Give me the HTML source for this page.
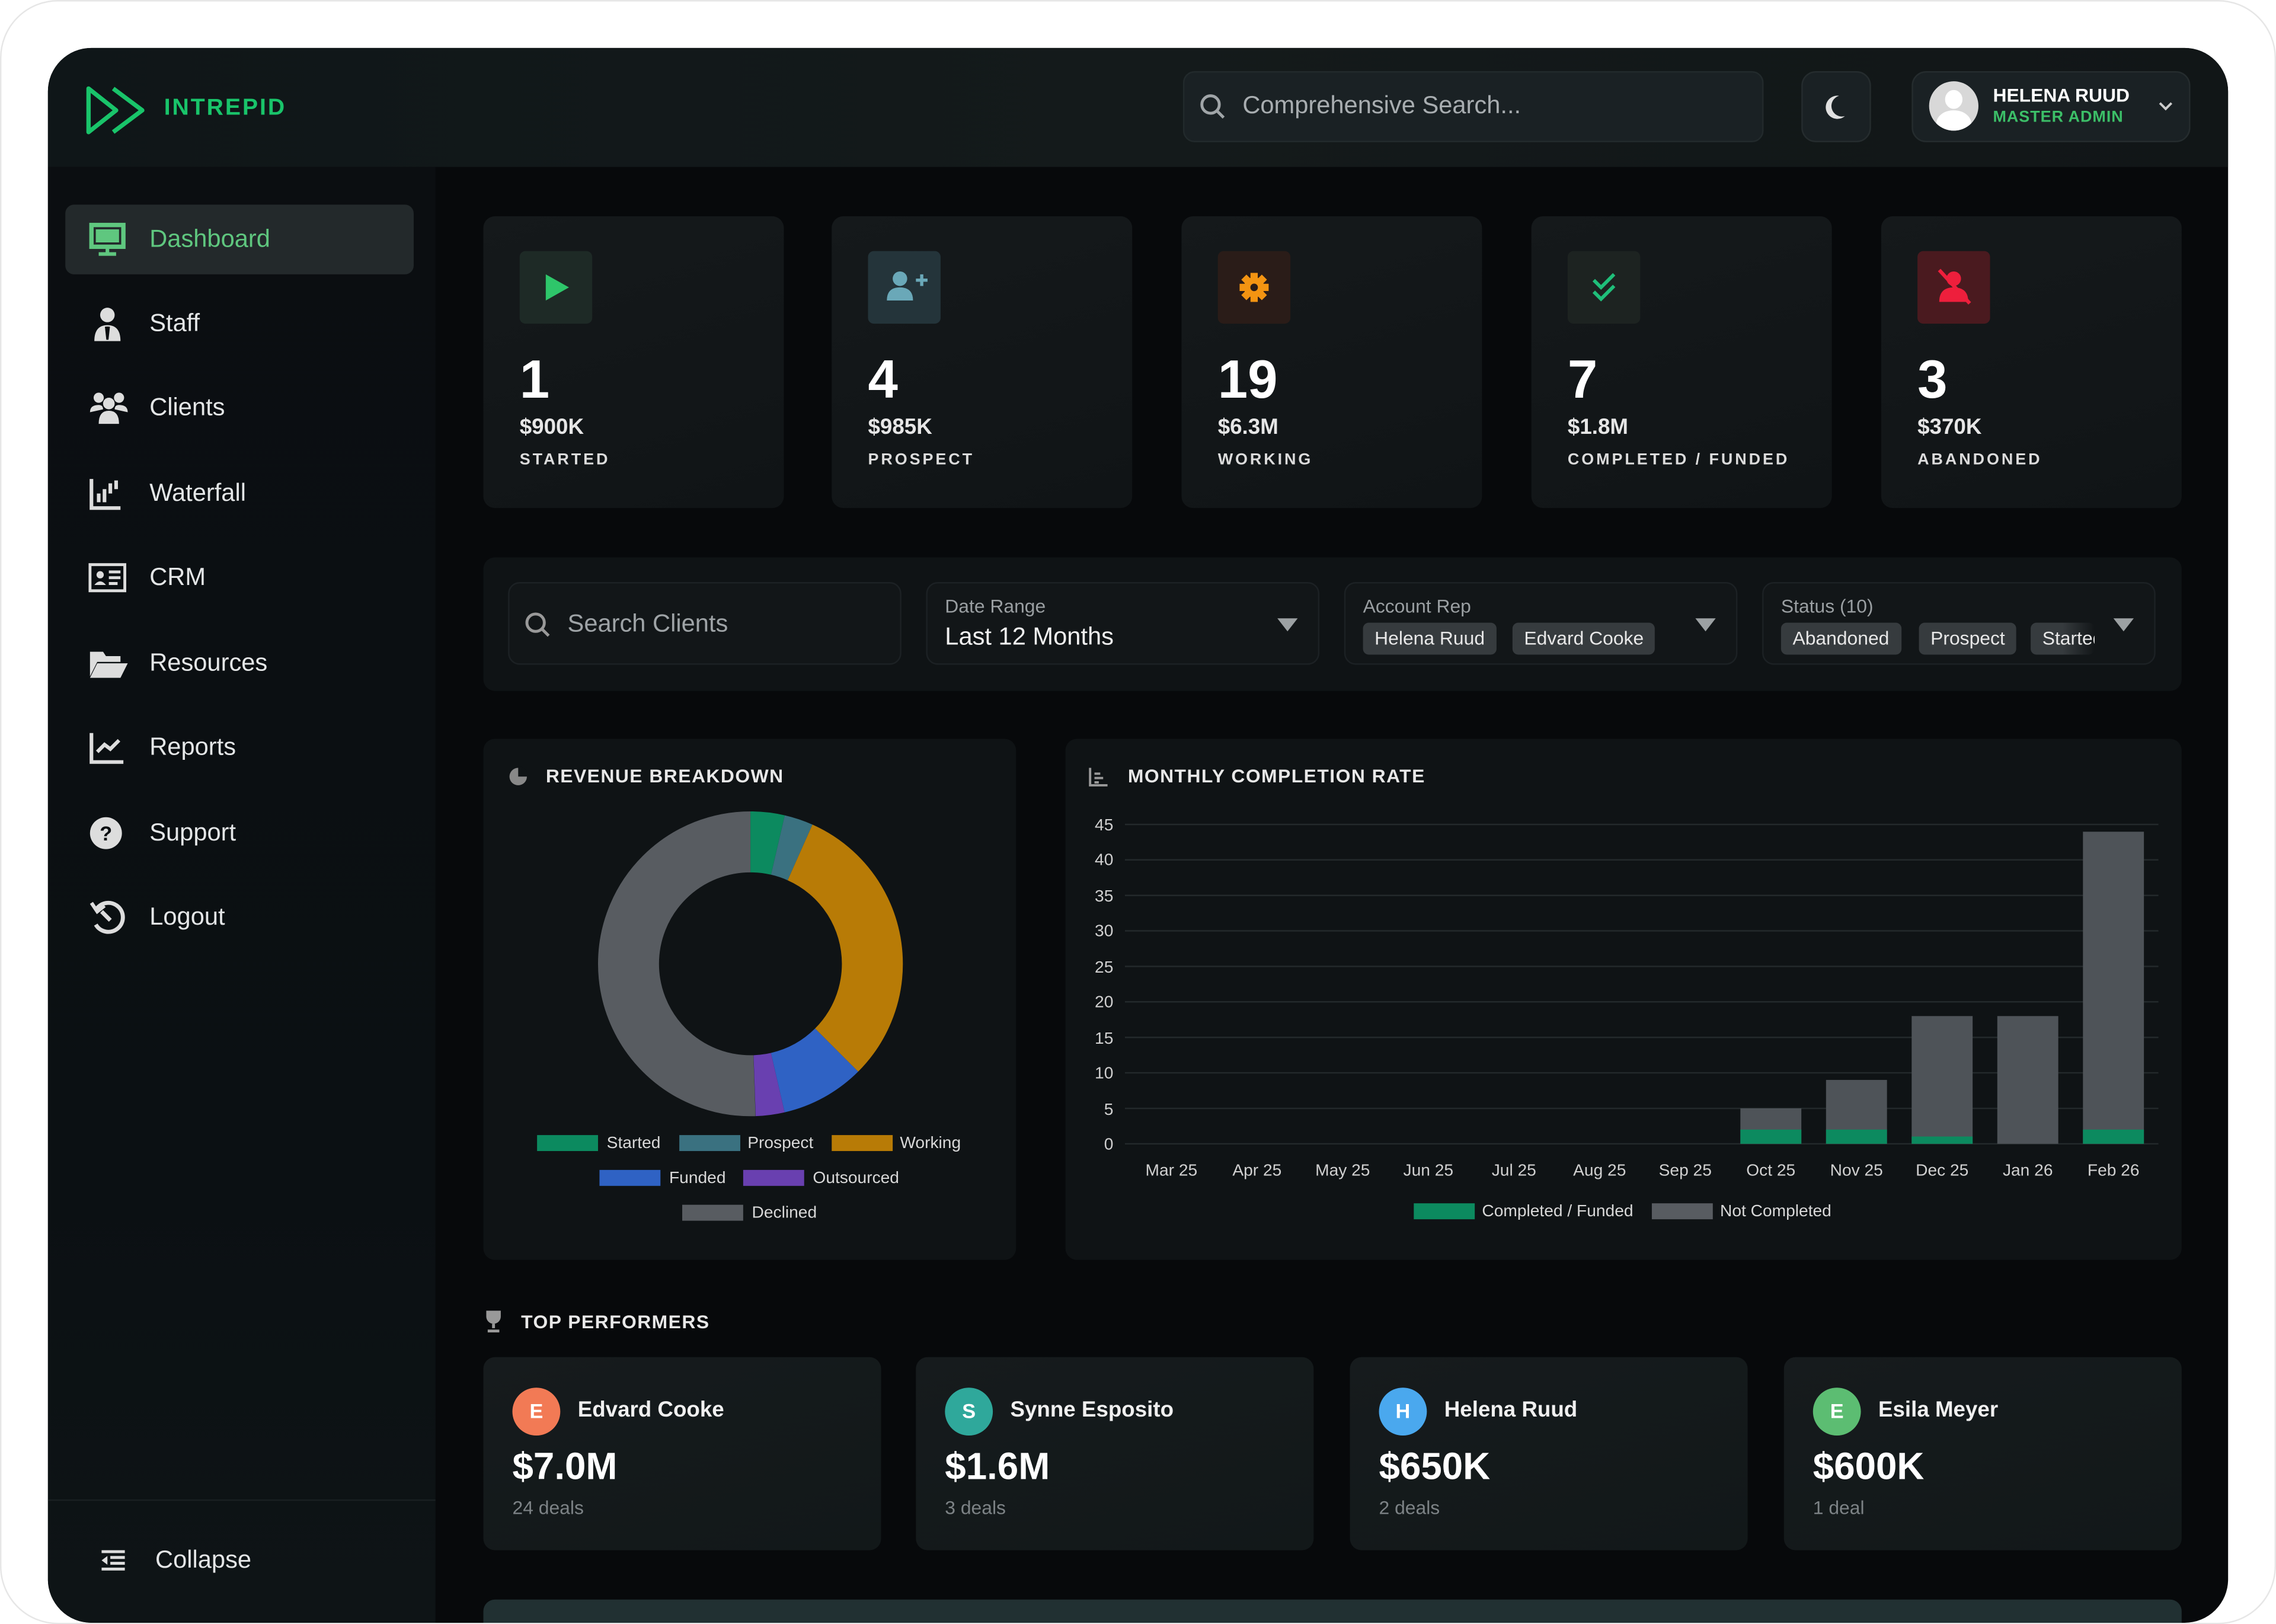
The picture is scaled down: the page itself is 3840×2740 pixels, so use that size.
<!DOCTYPE html>
<html><head><meta charset="utf-8"><style>
*{box-sizing:border-box;margin:0;padding:0}
html,body{width:3840px;height:2739px;overflow:hidden;background:#fff}
#s{position:absolute;left:0;top:0;width:1568px;height:1119px;transform:scale(2.44898);transform-origin:0 0;font-family:"Liberation Sans",sans-serif;color:#e8eaeb}
.abs{position:absolute}
.app{left:33px;top:33px;width:1502px;height:1085px;border-radius:30px 30px 30px 30px;background:#07090b;overflow:hidden}
.hdr{left:0;top:0;width:1502px;height:82px;background:linear-gradient(90deg,#0f1618,#141a1b 50%,#111617)}
.side{left:0;top:82px;width:267px;height:1003px;background:linear-gradient(180deg,#0b0e11,#0b1013 70%,#0e1416)}
.nav{position:absolute;left:12px;width:240px;height:48px;border-radius:6px;display:flex;align-items:center;font-size:17px;color:#e4e6e7}
.nav svg{position:absolute;left:16px}
.nav span{position:absolute;left:58px}
.card{position:absolute;background:linear-gradient(160deg,#15191b,#101416);border-radius:8px}
.ib{position:absolute;left:25px;top:24px;width:50px;height:50px;border-radius:4px}
.num{position:absolute;left:25px;top:92px;font-size:37px;font-weight:bold;color:#fff}
.val{position:absolute;left:25px;top:137px;font-size:15px;font-weight:bold;color:#e6e6e6}
.lab{position:absolute;left:25px;top:162px;font-size:11px;font-weight:bold;letter-spacing:1.6px;color:#dcdcdc}
.inp{position:absolute;top:17px;width:271px;height:57px;border-radius:8px;background:#121618;border:1px solid #1c2124}
.sl{position:absolute;left:12px;top:8px;font-size:13px;color:#9a9fa2}
.chip{position:absolute;top:27px;height:22px;border-radius:4px;background:#363b3e;color:#e8e8e8;font-size:13px;line-height:22px;padding:0 8px}
.tri{position:absolute;right:14px;top:24px;width:0;height:0;border-left:7px solid transparent;border-right:7px solid transparent;border-top:9px solid #9ca1a3}
.ttl{font-size:13px;font-weight:bold;letter-spacing:.6px;color:#e8e8e8}
.pc{position:absolute;top:902px;width:274px;height:133px;border-radius:8px;background:linear-gradient(160deg,#161b1d,#121819)}
.av{position:absolute;left:20px;top:21px;width:33px;height:33px;border-radius:50%;color:#fff;font-weight:bold;font-size:14px;text-align:center;line-height:33px}
.pn{position:absolute;left:65px;top:28px;font-size:15px;font-weight:bold;color:#f0f0f0}
.pv{position:absolute;left:20px;top:60px;font-size:26px;font-weight:bold;color:#fff}
.pd{position:absolute;left:20px;top:96px;font-size:13px;color:#7d8386}
</style></head><body><div id="s">
<div class="abs" style="left:0;top:0;width:1568px;height:1119px;border:1px solid #e6e6e6;border-radius:40px"></div>
<div class="abs app">
 <div class="abs hdr"></div>
 <svg class="abs" style="left:25px;top:26px" width="48" height="34" viewBox="0 0 48 34"><path d="M3 2 L22 17 L3 32 Z M20 2 L40 17 L20 32" fill="none" stroke="#19c46a" stroke-width="3" stroke-linejoin="round"/></svg>
 <div class="abs" style="left:80px;top:33px;font-size:16px;font-weight:bold;color:#19c46a;letter-spacing:1.2px">INTREPID</div>
 <div class="abs" style="left:782px;top:16px;width:400px;height:49px;border-radius:8px;background:#1a2124;border:1px solid #222a2c"></div>
 <svg class="abs" style="left:793px;top:31px" width="20" height="20" viewBox="0 0 20 20"><circle cx="8" cy="8" r="6" fill="none" stroke="#a0a5a8" stroke-width="2"/><path d="M12.5 12.5 L17 17" stroke="#a0a5a8" stroke-width="2"/></svg>
 <div class="abs" style="left:823px;top:30px;font-size:17px;color:#a8adb0">Comprehensive Search...</div>
 <div class="abs" style="left:1208px;top:16px;width:48px;height:49px;border-radius:10px;background:#1a2124;border:1px solid #252c2e"></div>
 <svg class="abs" style="left:1223px;top:31px" width="18" height="20" viewBox="0 0 18 20"><path d="M11 2 A8 8 0 1 0 15 16 A7 7 0 0 1 11 2 Z" fill="#e0e0e0"/></svg>
 <div class="abs" style="left:1284px;top:16px;width:192px;height:49px;border-radius:10px;background:#1a2124;border:1px solid #252c2e"></div>
 <div class="abs" style="left:1296px;top:23px;width:34px;height:34px;border-radius:50%;background:#d8d8d8;overflow:hidden"><div class="abs" style="left:11px;top:6px;width:12px;height:13px;border-radius:50%;background:#fff"></div><div class="abs" style="left:5px;top:20px;width:24px;height:18px;border-radius:50%;background:#fff"></div></div>
 <div class="abs" style="left:1340px;top:25px;font-size:13px;font-weight:bold;color:#fff">HELENA RUUD</div>
 <div class="abs" style="left:1340px;top:42px;font-size:11px;font-weight:bold;color:#3cbf68;letter-spacing:.4px">MASTER ADMIN</div>
 <svg class="abs" style="left:1453px;top:36px" width="12" height="8" viewBox="0 0 12 8"><path d="M2 2 L6 6 L10 2" fill="none" stroke="#ccc" stroke-width="1.6"/></svg>

 <div class="abs side">
  <div class="nav" style="top:26px;background:#23292b;color:#5fc77f"><svg width="26" height="24" viewBox="0 0 26 24"><rect x="2" y="2" width="22" height="15" fill="none" stroke="#5fc77f" stroke-width="3"/><rect x="5" y="5" width="16" height="9" fill="#5fc77f"/><path d="M13 17v4M7 22h12" stroke="#5fc77f" stroke-width="2.5"/></svg><span>Dashboard</span></div>
  <div class="nav" style="top:84px"><svg width="26" height="26" viewBox="0 0 26 26"><circle cx="13" cy="7" r="5" fill="#ddd"/><path d="M4 25 Q4 14 13 14 Q22 14 22 25Z" fill="#ddd"/><path d="M12 15 L13 24 L14 15" stroke="#0b0e11" stroke-width="1.5"/></svg><span>Staff</span></div>
  <div class="nav" style="top:142px"><svg width="28" height="24" viewBox="0 0 28 24"><circle cx="7" cy="5" r="3.5" fill="#ddd"/><circle cx="21" cy="5" r="3.5" fill="#ddd"/><circle cx="14" cy="9" r="4" fill="#ddd"/><path d="M1 15 Q1 10 7 10 Q10 10 10 13Z M27 15 Q27 10 21 10 Q18 10 18 13Z M7 23 Q7 14 14 14 Q21 14 21 23Z" fill="#ddd"/></svg><span>Clients</span></div>
  <div class="nav" style="top:201px"><svg width="24" height="24" viewBox="0 0 24 24"><path d="M2 2v20h20" fill="none" stroke="#ddd" stroke-width="2.5"/><path d="M7 12v6M11 9v9M15 5v7M19 3v6" stroke="#ddd" stroke-width="2.5"/></svg><span>Waterfall</span></div>
  <div class="nav" style="top:259px"><svg width="26" height="22" viewBox="0 0 26 22"><rect x="1" y="2" width="24" height="18" fill="none" stroke="#ddd" stroke-width="2"/><circle cx="8" cy="9" r="2.5" fill="#ddd"/><path d="M4 16 Q8 11 12 16Z" fill="#ddd"/><path d="M14 7h8M14 11h8M14 15h6" stroke="#ddd" stroke-width="2"/></svg><span>CRM</span></div>
  <div class="nav" style="top:318px"><svg width="28" height="22" viewBox="0 0 28 22"><path d="M1 3h9l2 3h10v4H6L1 20Z" fill="#ddd"/><path d="M6 11h21l-5 10H1Z" fill="#ddd"/></svg><span>Resources</span></div>
  <div class="nav" style="top:376px"><svg width="26" height="24" viewBox="0 0 26 24"><path d="M2 2v20h22" fill="none" stroke="#ddd" stroke-width="2.5"/><path d="M6 15l5-5 4 3 6-6" fill="none" stroke="#ddd" stroke-width="2.5"/></svg><span>Reports</span></div>
  <div class="nav" style="top:435px"><svg width="26" height="26" viewBox="0 0 26 26"><circle cx="12" cy="13" r="11" fill="#ddd"/><text x="12" y="18" text-anchor="middle" font-size="14" font-weight="bold" fill="#0b0e11" font-family="Liberation Sans">?</text></svg><span>Support</span></div>
  <div class="nav" style="top:493px"><svg width="26" height="26" viewBox="0 0 26 26"><path d="M5 8 A10 10 0 1 1 5 18" fill="none" stroke="#ddd" stroke-width="2.8"/><path d="M2 3 L6 9 L11 5" fill="none" stroke="#ddd" stroke-width="2.5"/><path d="M9 9 L15 15" stroke="#ddd" stroke-width="2.8"/></svg><span>Logout</span></div>
  <div class="abs" style="left:0;top:918px;width:267px;height:1px;background:#192022"></div>
  <svg class="abs" style="left:36px;top:952px" width="18" height="16" viewBox="0 0 18 16"><path d="M1 2h16M7 6h10M7 10h10M1 14h16" stroke="#ddd" stroke-width="2"/><path d="M1 8l4-3v6z" fill="#ddd"/></svg>
  <div class="abs" style="left:74px;top:950px;font-size:17px;color:#e4e6e7">Collapse</div>
 </div>

 <div class="card" style="left:300px;top:116px;width:207px;height:201px"><div class="ib" style="background:#1e2a26"><svg width="50" height="50"><path d="M18 16 L34 25 L18 34Z" fill="#2ec66a"/></svg></div><div class="num">1</div><div class="val">$900K</div><div class="lab">STARTED</div></div>
 <div class="card" style="left:540px;top:116px;width:207px;height:201px"><div class="ib" style="background:#24343a"><svg width="50" height="50"><circle cx="22" cy="19" r="5" fill="#6aa8b8"/><path d="M13 34 Q13 25 22 25 Q31 25 31 34Z" fill="#6aa8b8"/><path d="M33 20h8M37 16v8" stroke="#6aa8b8" stroke-width="2.2"/></svg></div><div class="num">4</div><div class="val">$985K</div><div class="lab">PROSPECT</div></div>
 <div class="card" style="left:781px;top:116px;width:207px;height:201px"><div class="ib" style="background:#2a1c18"><svg width="50" height="50"><g fill="#f39412"><circle cx="25" cy="25" r="7"/><rect x="22.5" y="15" width="5" height="20"/><rect x="15" y="22.5" width="20" height="5"/><rect x="22.5" y="15" width="5" height="20" transform="rotate(45 25 25)"/><rect x="22.5" y="15" width="5" height="20" transform="rotate(-45 25 25)"/></g><circle cx="25" cy="25" r="2.6" fill="#2a1c18"/></svg></div><div class="num">19</div><div class="val">$6.3M</div><div class="lab">WORKING</div></div>
 <div class="card" style="left:1022px;top:116px;width:207px;height:201px"><div class="ib" style="background:#1d2321"><svg width="50" height="50"><path d="M18 20l5 5 9-9M18 28l5 5 9-9" fill="none" stroke="#1fbf7a" stroke-width="2.4"/></svg></div><div class="num">7</div><div class="val">$1.8M</div><div class="lab">COMPLETED / FUNDED</div></div>
 <div class="card" style="left:1263px;top:116px;width:207px;height:201px"><div class="ib" style="background:#4a1a1f"><svg width="50" height="50"><circle cx="25" cy="19" r="5" fill="#ee1f3c"/><path d="M15 35 Q15 25 25 25 Q35 25 35 35Z" fill="#ee1f3c"/><path d="M15 13 L36 36" stroke="#ee1f3c" stroke-width="2.5"/></svg></div><div class="num">3</div><div class="val">$370K</div><div class="lab">ABANDONED</div></div>

 <div class="card" style="left:300px;top:351px;width:1170px;height:92px;background:#0f1315">
  <div class="inp" style="left:17px"><svg class="abs" style="left:10px;top:19px" width="20" height="20" viewBox="0 0 20 20"><circle cx="8" cy="8" r="6" fill="none" stroke="#999" stroke-width="2"/><path d="M12.5 12.5 L17 17" stroke="#999" stroke-width="2"/></svg><div class="abs" style="left:40px;top:18px;font-size:17px;color:#9ea3a6">Search Clients</div></div>
  <div class="inp" style="left:305px"><div class="sl">Date Range</div><div class="abs" style="left:12px;top:27px;font-size:17px;color:#f0f0f0">Last 12 Months</div><div class="tri" style="top:24px"></div></div>
  <div class="inp" style="left:593px"><div class="sl">Account Rep</div><div class="chip" style="left:12px">Helena Ruud</div><div class="chip" style="left:115px">Edvard Cooke</div><div class="tri"></div></div>
  <div class="inp" style="left:881px"><div class="sl">Status (10)</div><div class="chip" style="left:12px">Abandoned</div><div class="chip" style="left:107px">Prospect</div><div class="chip" style="left:184px;width:44px;overflow:hidden;background:linear-gradient(90deg,#363b3e 50%,#121618)">Started</div><div class="tri"></div></div>
 </div>

 <div class="card" style="left:300px;top:476px;width:367px;height:359px;background:#0f1315">
  <svg class="abs" style="left:16px;top:18px" width="16" height="16" viewBox="0 0 16 16"><circle cx="8" cy="8" r="6" fill="#888"/><path d="M8 8V1A7 7 0 0 1 15 8Z" fill="#0f1315"/></svg>
  <div class="abs ttl" style="left:43px;top:18px">REVENUE BREAKDOWN</div>
  <svg class="abs" style="left:0;top:0" width="367" height="359">
   <g transform="rotate(-90 184 155)" fill="none" stroke-width="42">
    <circle cx="184" cy="155" r="84" stroke="#585c61" stroke-dasharray="266.8 600" stroke-dashoffset="-261"/>
    <circle cx="184" cy="155" r="84" stroke="#0c8a5f" stroke-dasharray="19.1 600" stroke-dashoffset="0"/>
    <circle cx="184" cy="155" r="84" stroke="#3a7180" stroke-dasharray="16.1 600" stroke-dashoffset="-19.1"/>
    <circle cx="184" cy="155" r="84" stroke="#b87b06" stroke-dasharray="162.7 600" stroke-dashoffset="-35.2"/>
    <circle cx="184" cy="155" r="84" stroke="#2f62c4" stroke-dasharray="46.9 600" stroke-dashoffset="-197.9"/>
    <circle cx="184" cy="155" r="84" stroke="#6940b0" stroke-dasharray="16.1 600" stroke-dashoffset="-244.8"/>
   </g>
   <g font-family="Liberation Sans" font-size="11.5" fill="#d8d8d8">
    <rect x="37" y="273" width="42" height="11" fill="#0c8a5f"/><text x="85" y="282">Started</text>
    <rect x="135" y="273" width="42" height="11" fill="#3a7180"/><text x="182" y="282">Prospect</text>
    <rect x="240" y="273" width="42" height="11" fill="#b87b06"/><text x="287" y="282">Working</text>
    <rect x="80" y="297" width="42" height="11" fill="#2f62c4"/><text x="128" y="306">Funded</text>
    <rect x="179" y="297" width="42" height="11" fill="#6940b0"/><text x="227" y="306">Outsourced</text>
    <rect x="137" y="321" width="42" height="11" fill="#585c61"/><text x="185" y="330">Declined</text>
   </g>
  </svg>
 </div>

 <div class="card" style="left:701px;top:476px;width:769px;height:359px;background:#0f1315">
  <svg class="abs" style="left:16px;top:19px" width="14" height="14" viewBox="0 0 14 14"><path d="M1 1v12h12" fill="none" stroke="#999" stroke-width="1.6"/><path d="M4 5h4M4 8h6M4 11h3" stroke="#999" stroke-width="1.6"/></svg>
  <div class="abs ttl" style="left:43px;top:18px">MONTHLY COMPLETION RATE</div>
  <svg class="abs" style="left:-734px;top:-509px" width="1568" height="1118">
   <g stroke="#23292b" stroke-width="1">
    <line x1="775" x2="1487" y1="788" y2="788"/><line x1="775" x2="1487" y1="763.6" y2="763.6"/><line x1="775" x2="1487" y1="739.1" y2="739.1"/><line x1="775" x2="1487" y1="714.7" y2="714.7"/><line x1="775" x2="1487" y1="690.2" y2="690.2"/><line x1="775" x2="1487" y1="665.8" y2="665.8"/><line x1="775" x2="1487" y1="641.3" y2="641.3"/><line x1="775" x2="1487" y1="616.9" y2="616.9"/><line x1="775" x2="1487" y1="592.4" y2="592.4"/><line x1="775" x2="1487" y1="568" y2="568"/>
   </g>
   <g font-family="Liberation Sans" font-size="11.5" fill="#d0d0d0" text-anchor="end">
    <text x="767" y="792">0</text><text x="767" y="768">5</text><text x="767" y="743">10</text><text x="767" y="719">15</text><text x="767" y="694">20</text><text x="767" y="670">25</text><text x="767" y="645">30</text><text x="767" y="621">35</text><text x="767" y="596">40</text><text x="767" y="572">45</text>
   </g>
   <g fill="#4e5358">
    <rect x="1199" y="763.6" width="42" height="24.4"/><rect x="1258" y="744" width="42" height="44"/><rect x="1317" y="700" width="42" height="88"/><rect x="1376" y="700" width="42" height="88"/><rect x="1435" y="573" width="42" height="215"/>
   </g>
   <g fill="#0c8a5f">
    <rect x="1199" y="778.2" width="42" height="9.8"/><rect x="1258" y="778.2" width="42" height="9.8"/><rect x="1317" y="783" width="42" height="5"/><rect x="1435" y="778.2" width="42" height="9.8"/>
   </g>
   <g font-family="Liberation Sans" font-size="11.5" fill="#d0d0d0" text-anchor="middle">
    <text x="807" y="810">Mar 25</text><text x="866" y="810">Apr 25</text><text x="925" y="810">May 25</text><text x="984" y="810">Jun 25</text><text x="1043" y="810">Jul 25</text><text x="1102" y="810">Aug 25</text><text x="1161" y="810">Sep 25</text><text x="1220" y="810">Oct 25</text><text x="1279" y="810">Nov 25</text><text x="1338" y="810">Dec 25</text><text x="1397" y="810">Jan 26</text><text x="1456" y="810">Feb 26</text>
   </g>
   <rect x="974" y="829" width="42" height="11" fill="#0c8a5f"/><text x="1021" y="838" font-family="Liberation Sans" font-size="11.5" fill="#d8d8d8">Completed / Funded</text>
   <rect x="1138" y="829" width="42" height="11" fill="#585c61"/><text x="1185" y="838" font-family="Liberation Sans" font-size="11.5" fill="#d8d8d8">Not Completed</text>
  </svg>
 </div>

 <svg class="abs" style="left:300px;top:869px" width="14" height="16" viewBox="0 0 14 16"><path d="M2 1h10v4a5 5 0 0 1-10 0Z" fill="#999"/><path d="M7 10v3M3 15h8" stroke="#999" stroke-width="2"/></svg>
 <div class="abs ttl" style="left:326px;top:870px">TOP PERFORMERS</div>
 <div class="pc" style="left:300px"><div class="av" style="background:#f27a55">E</div><div class="pn">Edvard Cooke</div><div class="pv">$7.0M</div><div class="pd">24 deals</div></div>
 <div class="pc" style="left:598px"><div class="av" style="background:#2fa89b">S</div><div class="pn">Synne Esposito</div><div class="pv">$1.6M</div><div class="pd">3 deals</div></div>
 <div class="pc" style="left:897px"><div class="av" style="background:#4aa8ee">H</div><div class="pn">Helena Ruud</div><div class="pv">$650K</div><div class="pd">2 deals</div></div>
 <div class="pc" style="left:1196px"><div class="av" style="background:#5cbd72">E</div><div class="pn">Esila Meyer</div><div class="pv">$600K</div><div class="pd">1 deal</div></div>
 <div class="abs" style="left:300px;top:1069px;width:1170px;height:30px;border-radius:8px;background:#213032"></div>
</div>
</div></body></html>
